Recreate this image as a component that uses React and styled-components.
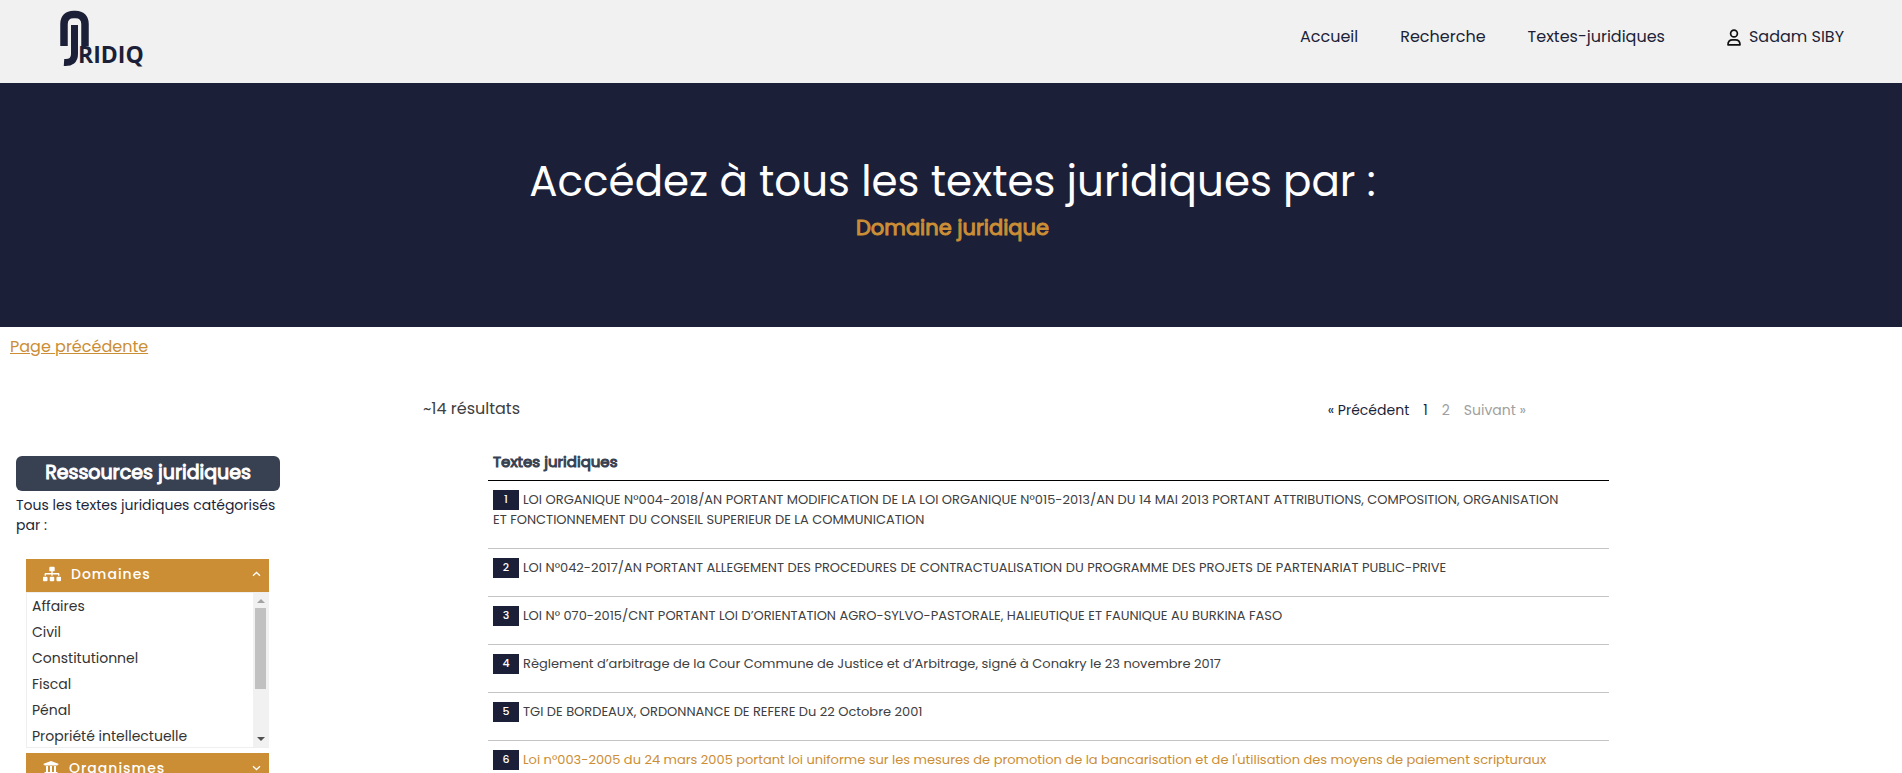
import React from "react";
import styled, { createGlobalStyle } from "styled-components";
import { FaSitemap, FaUniversity } from "react-icons/fa";

const navy = "#1c1f38";
const gold = "#cb8e35";
const slate = "#384152";

const GlobalStyle = createGlobalStyle`
  * { box-sizing: border-box; }
  body {
    margin: 0;
    background: #fff;
    color: ${navy};
    font-family: Poppins, Inter, "Open Sans", sans-serif;
    font-size: 16px;
    line-height: 24px;
    font-weight: 400;
  }
  a { color: inherit; text-decoration: none; }
  button { font: inherit; border: 0; cursor: pointer; }
`;

const Header = styled.header`
  display: flex;
  justify-content: space-between;
  align-items: flex-start;
  height: 83px;
  padding: 0 58px 0 60px;
  background: #f1f1f1;
`;

const Logo = styled.a`
  display: block;
  padding-top: 10px;
  line-height: 0;
`;

const LogoText = styled.text`
  font-family: "Open Sans", sans-serif;
  font-size: 23px;
  font-weight: 700;
  fill: ${navy};
`;

const Nav = styled.nav`
  display: flex;
  align-items: center;
  gap: 42px;
  padding-top: 25px;
`;

const Account = styled.a`
  display: flex;
  align-items: center;
  gap: 8px;
  margin-left: 20px;
`;

const Hero = styled.section`
  height: 244px;
  padding: 69px 0 0 3px;
  background: ${navy};
  text-align: center;
`;

const HeroTitle = styled.h1`
  margin: 0;
  color: #fff;
  font-size: 42px;
  line-height: 60px;
  font-weight: 400;
`;

const HeroSub = styled.p`
  margin: 0;
  color: ${gold};
  font-size: 21px;
  line-height: 32px;
  -webkit-text-stroke: 1px;
`;

const BackLink = styled.a`
  display: inline-block;
  margin: 8px 0 0 10px;
  color: ${gold};
  text-decoration: underline;
`;

const ResultBar = styled.div`
  display: flex;
  justify-content: space-between;
  align-items: center;
  margin: 37px 376px 0 423px;
  color: #404040;
`;

const Pager = styled.nav`
  display: flex;
  gap: 14px;
  padding-top: 2px;
  font-size: 14px;
`;

const PageLink = styled.a`
  color: ${(p) => (p.$muted ? "#a0a0a0" : navy)};
`;

const Content = styled.main`
  display: flex;
  justify-content: space-between;
  align-items: flex-start;
  margin-top: 34px;
  padding: 0 293px 0 16px;
  gap: 208px;
`;

const Sidebar = styled.aside`
  flex: 0 0 264px;
`;

const SideTitle = styled.h2`
  margin: 0;
  height: 35px;
  border-radius: 6px;
  background: ${slate};
  color: #fff;
  font-size: 19px;
  line-height: 33px;
  font-weight: 400;
  -webkit-text-stroke: 1px;
  text-align: center;
`;

const SideIntro = styled.p`
  margin: 4px 0 24px;
  font-size: 14px;
  line-height: 20px;
`;

const Accordion = styled.div`
  display: flex;
  flex-direction: column;
  gap: 5px;
  margin: 0 11px 0 10px;
`;

const AccordionButton = styled.button`
  display: flex;
  align-items: center;
  width: 100%;
  height: 33px;
  padding: 0 8px 3px 17px;
  gap: 10px;
  background: ${gold};
  color: #fff;
  font-size: 14px;
  font-weight: 500;
  letter-spacing: 1px;
  text-align: left;
  span { flex: 1; }
`;

const Panel = styled.div`
  display: flex;
  height: 156px;
  border: 1px solid #efefef;
  border-right: 0;
`;

const DomainList = styled.ul`
  flex: 1;
  margin: 0;
  padding: 0 0 0 5px;
  list-style: none;
  color: #333;
  font-size: 14px;
  line-height: 26px;
`;

const ScrollTrack = styled.div`
  display: flex;
  flex-direction: column;
  align-items: center;
  width: 16px;
  padding: 6px 1px 6px 0;
  background: #f1f1f1;
`;

const ScrollThumb = styled.div`
  width: 11px;
  height: 81px;
  margin: 5px 0 auto;
  background: #c1c1c1;
`;

const ScrollArrow = styled.div`
  border: 4px solid transparent;
  border-top: ${(p) => (p.$up ? "0" : "4px solid #505050")};
  border-bottom: ${(p) => (p.$up ? "4px solid #a3a3a3" : "0")};
`;

const TextTable = styled.table`
  flex: 1;
  border-collapse: separate;
  border-spacing: 0;
`;

const HeadCell = styled.th`
  padding: 0 5px 12px;
  border-bottom: 1px solid #000;
  color: ${slate};
  font-size: 15px;
  line-height: 12px;
  font-weight: 400;
  -webkit-text-stroke: 1px;
  text-align: left;
`;

const TextCell = styled.td`
  padding: 9px 40px 18px 5px;
  border-bottom: 1px solid #c4c4c4;
  color: ${(p) => (p.$active ? gold : "#404040")};
  font-size: 13px;
  line-height: 20px;
`;

const Badge = styled.span`
  display: inline-block;
  width: 26px;
  height: 20px;
  margin-right: 4px;
  background: ${navy};
  color: #fff;
  font-size: 11px;
  line-height: 18px;
  font-weight: 500;
  text-align: center;
  vertical-align: top;
`;

const UserIcon = () => (
  <svg width="14" height="17" viewBox="0 0 14 17" fill="none" stroke="#111" strokeWidth="1.7" strokeLinejoin="round">
    <circle cx="7" cy="4.500" r="3.400" />
    <path d="M1 15.800C1 12.500 3 10.800 5.500 10.800H8.500C11 10.800 13 12.500 13 15.800Z" />
  </svg>
);

const Chevron = ({ up }) => (
  <svg width="9" height="6" viewBox="0 0 9 6" fill="none" stroke="#fff" strokeWidth="1.3">
    <path d={up ? "M1 4.800L4.500 1.500L8 4.800" : "M1 1.200L4.500 4.500L8 1.200"} />
  </svg>
);

const domains = ["Affaires", "Civil", "Constitutionnel", "Fiscal", "Pénal", "Propriété intellectuelle"];

const texts = [
  "LOI ORGANIQUE N°004-2018/AN PORTANT MODIFICATION DE LA LOI ORGANIQUE N°015-2013/AN DU 14 MAI 2013 PORTANT ATTRIBUTIONS, COMPOSITION, ORGANISATION ET FONCTIONNEMENT DU CONSEIL SUPERIEUR DE LA COMMUNICATION",
  "LOI N°042-2017/AN PORTANT ALLEGEMENT DES PROCEDURES DE CONTRACTUALISATION DU PROGRAMME DES PROJETS DE PARTENARIAT PUBLIC-PRIVE",
  "LOI N° 070-2015/CNT PORTANT LOI D’ORIENTATION AGRO-SYLVO-PASTORALE, HALIEUTIQUE ET FAUNIQUE AU BURKINA FASO",
  "Règlement d’arbitrage de la Cour Commune de Justice et d’Arbitrage, signé à Conakry le 23 novembre 2017",
  "TGI DE BORDEAUX, ORDONNANCE DE REFERE Du 22 Octobre 2001",
  "Loi n°003-2005 du 24 mars 2005 portant loi uniforme sur les mesures de promotion de la bancarisation et de l'utilisation des moyens de paiement scripturaux",
];

export default function App() {
  return (
    <>
      <GlobalStyle />
      <Header>
        <Logo href="#" aria-label="Juridiq">
          <svg width="96" height="62" viewBox="0 0 96 62">
            <path d="M4 36V14C4 8 7.500 4.500 13.500 4.500H15.500C21.500 4.500 25 8 25 14V36" fill="none" stroke={navy} strokeWidth="7.500" />
            <path d="M14.500 15V44C14.500 50 11 53 4 52.500" fill="none" stroke={navy} strokeWidth="7" />
            <LogoText x="18" y="53">RIDIQ</LogoText>
          </svg>
        </Logo>
        <Nav>
          <a href="#">Accueil</a>
          <a href="#">Recherche</a>
          <a href="#">Textes-juridiques</a>
          <Account href="#"><UserIcon />Sadam SIBY</Account>
        </Nav>
      </Header>
      <Hero>
        <HeroTitle>Accédez à tous les textes juridiques par :</HeroTitle>
        <HeroSub>Domaine juridique</HeroSub>
      </Hero>
      <BackLink href="#">Page précédente</BackLink>
      <ResultBar>
        <span>~14 résultats</span>
        <Pager>
          <PageLink href="#">« Précédent</PageLink>
          <PageLink href="#">1</PageLink>
          <PageLink href="#" $muted>2</PageLink>
          <PageLink href="#" $muted>Suivant »</PageLink>
        </Pager>
      </ResultBar>
      <Content>
        <Sidebar>
          <SideTitle>Ressources juridiques</SideTitle>
          <SideIntro>Tous les textes juridiques catégorisés par :</SideIntro>
          <Accordion>
            <div>
              <AccordionButton aria-expanded="true"><FaSitemap size={18} /><span>Domaines</span><Chevron up /></AccordionButton>
              <Panel>
                <DomainList>
                  {domains.map((d) => <li key={d}><a href="#">{d}</a></li>)}
                </DomainList>
                <ScrollTrack>
                  <ScrollArrow $up />
                  <ScrollThumb />
                  <ScrollArrow />
                </ScrollTrack>
              </Panel>
            </div>
            <AccordionButton aria-expanded="false"><FaUniversity size={16} /><span>Organismes</span><Chevron /></AccordionButton>
          </Accordion>
        </Sidebar>
        <TextTable>
          <thead><tr><HeadCell>Textes juridiques</HeadCell></tr></thead>
          <tbody>
            {texts.map((t, i) => (
              <tr key={t}>
                <TextCell $active={i === 5}><Badge>{i + 1}</Badge><a href="#">{t}</a></TextCell>
              </tr>
            ))}
          </tbody>
        </TextTable>
      </Content>
    </>
  );
}
